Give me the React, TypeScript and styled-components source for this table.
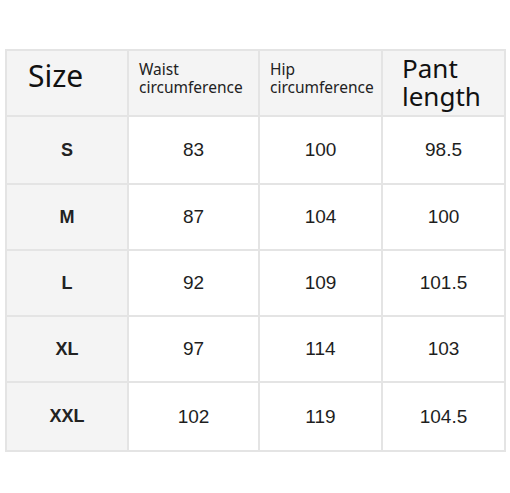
import React from 'react';
import styled, { createGlobalStyle } from 'styled-components';

const GlobalStyle = createGlobalStyle`
  html, body {
    margin: 0;
    padding: 0;
    background: #fff;
  }
`;

const Page = styled.div`
  width: 510px;
  height: 493px;
  padding: 49px 0 0 5px;
  box-sizing: border-box;
  background: #fff;
`;

const Grid = styled.div`
  display: inline-grid;
  grid-template-columns: 120px 129px 121px 121px;
  grid-template-rows: 64px 66px 64px 64px 64px 67px;
  gap: 2px;
  padding: 2px;
  background: #e4e4e4;
`;

const Cell = styled.div<{ $shaded?: boolean }>`
  background: ${p => (p.$shaded ? '#f4f4f4' : '#fff')};
  display: flex;
  align-items: center;
  justify-content: center;
  color: #1e1e1e;
  font-family: 'Liberation Sans', Arial, sans-serif;
  font-size: 19px;
`;

const SizeLabel = styled(Cell)`
  font-weight: bold;
  font-size: 18px;
  color: #222;
`;

const BigHead = styled(Cell)<{ $left?: number; $size?: number; $top?: number }>`
  font-family: 'Noto Sans', 'DejaVu Sans', sans-serif;
  font-size: ${p => p.$size ?? 26}px;
  line-height: 28px;
  align-items: flex-start;
  justify-content: flex-start;
  padding: ${p => p.$top ?? 0}px 0 0 ${p => p.$left ?? 0}px;
  color: #111;
`;

const SmallHead = styled(Cell)`
  font-family: 'Noto Sans', 'DejaVu Sans', sans-serif;
  font-size: 15.5px;
  line-height: 18px;
  align-items: flex-start;
  justify-content: flex-start;
  padding: 9px 0 0 10px;
  color: #222;
`;

const rows = [
  ['S', '83', '100', '98.5'],
  ['M', '87', '104', '100'],
  ['L', '92', '109', '101.5'],
  ['XL', '97', '114', '103'],
  ['XXL', '102', '119', '104.5'],
];

export default function App() {
  return (
    <>
      <GlobalStyle />
      <Page>
        <Grid>
          <BigHead $shaded $left={21} $size={30} $top={11}>Size</BigHead>
          <SmallHead $shaded>Waist<br />circumference</SmallHead>
          <SmallHead $shaded>Hip<br />circumference</SmallHead>
          <BigHead $shaded $left={19} $top={3}>Pant<br />length</BigHead>
          {rows.map(r => (
            <React.Fragment key={r[0]}>
              <SizeLabel $shaded>{r[0]}</SizeLabel>
              <Cell>{r[1]}</Cell>
              <Cell>{r[2]}</Cell>
              <Cell>{r[3]}</Cell>
            </React.Fragment>
          ))}
        </Grid>
      </Page>
    </>
  );
}
